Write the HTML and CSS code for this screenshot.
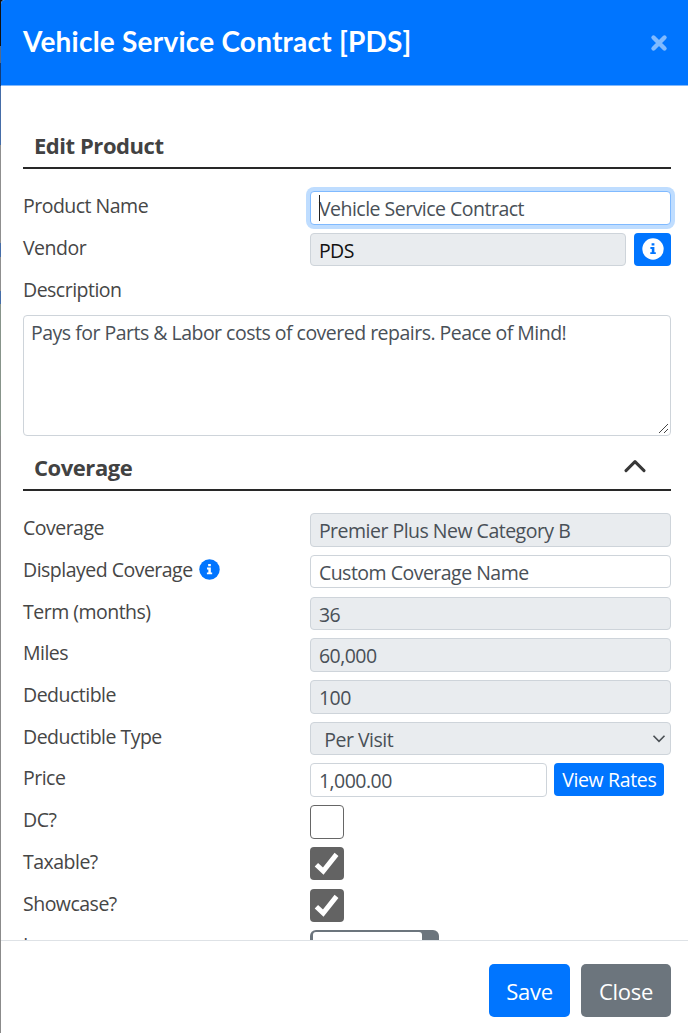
FILE: index.html
```html
<!DOCTYPE html>
<html lang="en">
<head>
<meta charset="utf-8">
<title>Vehicle Service Contract [PDS]</title>
<link rel="stylesheet" href="styles.css">
</head>
<body>
<div class="page">
<div class="modal">
  <header class="modal-header">
    <h1 class="title">Vehicle Service Contract [PDS]</h1>
    <svg class="close-icon" viewBox="0 0 18 18"><path d="M3.5 3.5l11 11M14.5 3.5l-11 11"/></svg>
  </header>
  <main class="modal-body">
    <h2 class="section-title first">Edit Product</h2>
    <div class="rows">
      <div class="row"><label class="label">Product Name</label><div class="field focus"><span class="caret"></span>Vehicle Service Contract</div></div>
      <div class="row"><label class="label">Vendor</label><div class="field readonly dark">PDS</div>
        <div class="info-button"><svg class="info-icon" viewBox="0 0 22 22"><circle class="disc" cx="11" cy="11" r="10.7"/><path class="mark" d="M9.6 5.2h2.8v2.4H9.6zM8.4 9h4v5.2h1.4v1.9H8.3v-1.9h1.5v-3.3H8.4z"/></svg></div></div>
      <div class="row"><label class="label">Description</label></div>
    </div>
    <div class="textarea">Pays for Parts &amp; Labor costs of covered repairs. Peace of Mind!<svg class="grip" viewBox="0 0 11 11"><path d="M1 10l9-9M6 10l4-4"/></svg></div>
    <h2 class="section-title second">Coverage<svg class="chevron" viewBox="0 0 22 14"><path d="M2 11.6l9-9 9 9"/></svg></h2>
    <div class="rows">
      <div class="row"><label class="label">Coverage</label><div class="field readonly">Premier Plus New Category B</div></div>
      <div class="row"><label class="label">Displayed Coverage <svg class="info-icon blue" viewBox="0 0 22 22"><circle class="disc" cx="11" cy="11" r="10.7"/><path class="mark" d="M9.6 5.2h2.8v2.4H9.6zM8.4 9h4v5.2h1.4v1.9H8.3v-1.9h1.5v-3.3H8.4z"/></svg></label><div class="field">Custom Coverage Name</div></div>
      <div class="row"><label class="label">Term (months)</label><div class="field readonly">36</div></div>
      <div class="row"><label class="label">Miles</label><div class="field readonly">60,000</div></div>
      <div class="row"><label class="label">Deductible</label><div class="field readonly">100</div></div>
      <div class="row"><label class="label">Deductible Type</label><div class="field readonly select">Per Visit<svg class="arrow" viewBox="0 0 14 10"><path d="M1.5 1.8l5.5 5.6 5.5-5.6"/></svg></div></div>
      <div class="row"><label class="label">Price</label><div class="field price">1,000.00</div><div class="rates">View Rates</div></div>
      <div class="row"><label class="label">DC?</label><div class="check"></div></div>
      <div class="row"><label class="label">Taxable?</label><div class="check on"><svg class="tick" viewBox="0 0 34 34"><path d="M6.5 18l7 6.5L27 7.5"/></svg></div></div>
      <div class="row"><label class="label">Showcase?</label><div class="check on"><svg class="tick" viewBox="0 0 34 34"><path d="M6.5 18l7 6.5L27 7.5"/></svg></div></div>
      <div class="row"><label class="label">Image</label><div class="upload"><div class="upload-inner"></div></div></div>
    </div>
  </main>
  <footer class="modal-footer"><div class="btn save">Save</div><div class="btn close">Close</div></footer>
</div>
</div>
</body>
</html>
```
FILE: styles.css
```css
* { box-sizing: border-box; }
body { margin: 0; background: #8b8b8b; font-family: "Open Sans", "Noto Sans", sans-serif; font-size: 19.5px; color: #464646; letter-spacing: -0.51px; }
.page { height: 1033px; padding-left: 1px; overflow: hidden; background: linear-gradient(#111 0 46px, #536a8a 46px 63px, #123c78 63px 86px, #456da8 86px 145px, #8f8f8f 145px 243px, #456da8 243px 257px, #8f8f8f 257px 291px, #456da8 291px 304px, #87948a 304px 436px, #8b8b8b 436px); }
.modal { height: 1033px; display: flex; flex-direction: column; background: #fff; border-top-left-radius: 4px; overflow: hidden; }
.modal-header { flex: none; height: 86px; padding: 0 20px 1px 22px; display: flex; align-items: center; justify-content: space-between; background: #0075ff; border-bottom: 1px solid #82b8fa; }
.title { margin: -2px 0 0; font: 700 28px/36px Lato, sans-serif; letter-spacing: 0.22px; color: #fff; }
.close-icon { width: 18px; height: 18px; margin-top: 2px; stroke: #80baff; stroke-width: 4.4; stroke-linecap: round; fill: none; }
.modal-body { flex: none; height: 854px; overflow: hidden; padding: 40px 17px 0 22px; }
.section-title { margin: 0; padding: 0 25px 0 11px; display: flex; justify-content: space-between; font-size: 22px; font-weight: 700; line-height: 30px; color: #424242; letter-spacing: -0.45px; border-bottom: 2px solid #282828; }
.first { height: 43px; padding-top: 4px; margin-bottom: 22.3px; }
.second { height: 42px; padding-top: 3px; margin: 13px 0 22px; }
.chevron { width: 22px; height: 14px; margin-top: 7px; fill: none; stroke: #383838; stroke-width: 3; stroke-linecap: round; stroke-linejoin: round; }
.rows { display: flex; flex-direction: column; }
.row { height: 41.7px; display: flex; align-items: flex-start; }
.label { flex: none; width: 287.3px; height: 30px; line-height: 30px; display: flex; align-items: center; }
.field { position: relative; flex: 1; height: 33.4px; padding: 1px 7.6px 0; line-height: 32px; background: #fff; border: 1.4px solid #ced4da; border-radius: 4px; color: #495057; white-space: nowrap; }
.readonly { background: #e9ecef; }
.dark { color: #111; }
.focus { border-color: #80baff; box-shadow: 0 0 0 4px #bfddff; }
.caret { position: absolute; left: 8px; top: 3px; width: 1px; height: 26px; background: #222; }
.info-button { display: flex; align-items: center; justify-content: center; width: 37px; height: 33px; margin-left: 7.6px; background: #0075ff; border-radius: 4px; }
.info-icon { width: 22px; height: 22px; }
.info-icon .disc { fill: #fff; }
.info-icon .mark { fill: #0075ff; }
.blue { width: 21px; height: 21px; margin-left: 6px; margin-top: -2px; }
.blue .disc { fill: #0075ff; }
.blue .mark { fill: #fff; }
.textarea { position: relative; height: 121px; margin-top: -1px; padding: 1px 7px; line-height: 32px; border: 1.4px solid #ced4da; border-radius: 4px; color: #495057; white-space: nowrap; }
.grip { position: absolute; right: 1px; bottom: 1px; width: 11px; height: 11px; fill: none; stroke: #444; }
.select { padding-left: 13px; }
.arrow { position: absolute; right: 4px; top: 11px; width: 14px; height: 10px; fill: none; stroke: #4a4f54; stroke-width: 1.6; }
.price { flex: none; width: 237px; }
.rates { width: 110px; height: 33px; margin-left: 7px; line-height: 34px; text-align: center; color: #fff; background: #0075ff; border-radius: 4px; letter-spacing: -0.35px; }
.check { width: 33.4px; height: 33.4px; border: 1.4px solid #666; border-radius: 4px; }
.on { background: #636363; border: 0; }
.tick { display: block; width: 33.4px; height: 33.4px; fill: none; stroke: #fff; stroke-width: 5; }
.upload { width: 129px; height: 34px; padding: 2px 17px 2px 3px; background: #6c757d; border-radius: 6px; }
.upload-inner { height: 29px; background: #fff; border-radius: 3px; }
.modal-footer { flex: 1; display: flex; justify-content: flex-end; gap: 11px; padding: 23px 17px 0 0; border-top: 1px solid #dee2e6; }
.btn { height: 53px; line-height: 55px; border-radius: 5px; text-align: center; color: #fff; font-size: 22px; letter-spacing: -0.3px; }
.save { width: 81px; background: #0075ff; }
.close { width: 90px; background: #6c757d; }
```
